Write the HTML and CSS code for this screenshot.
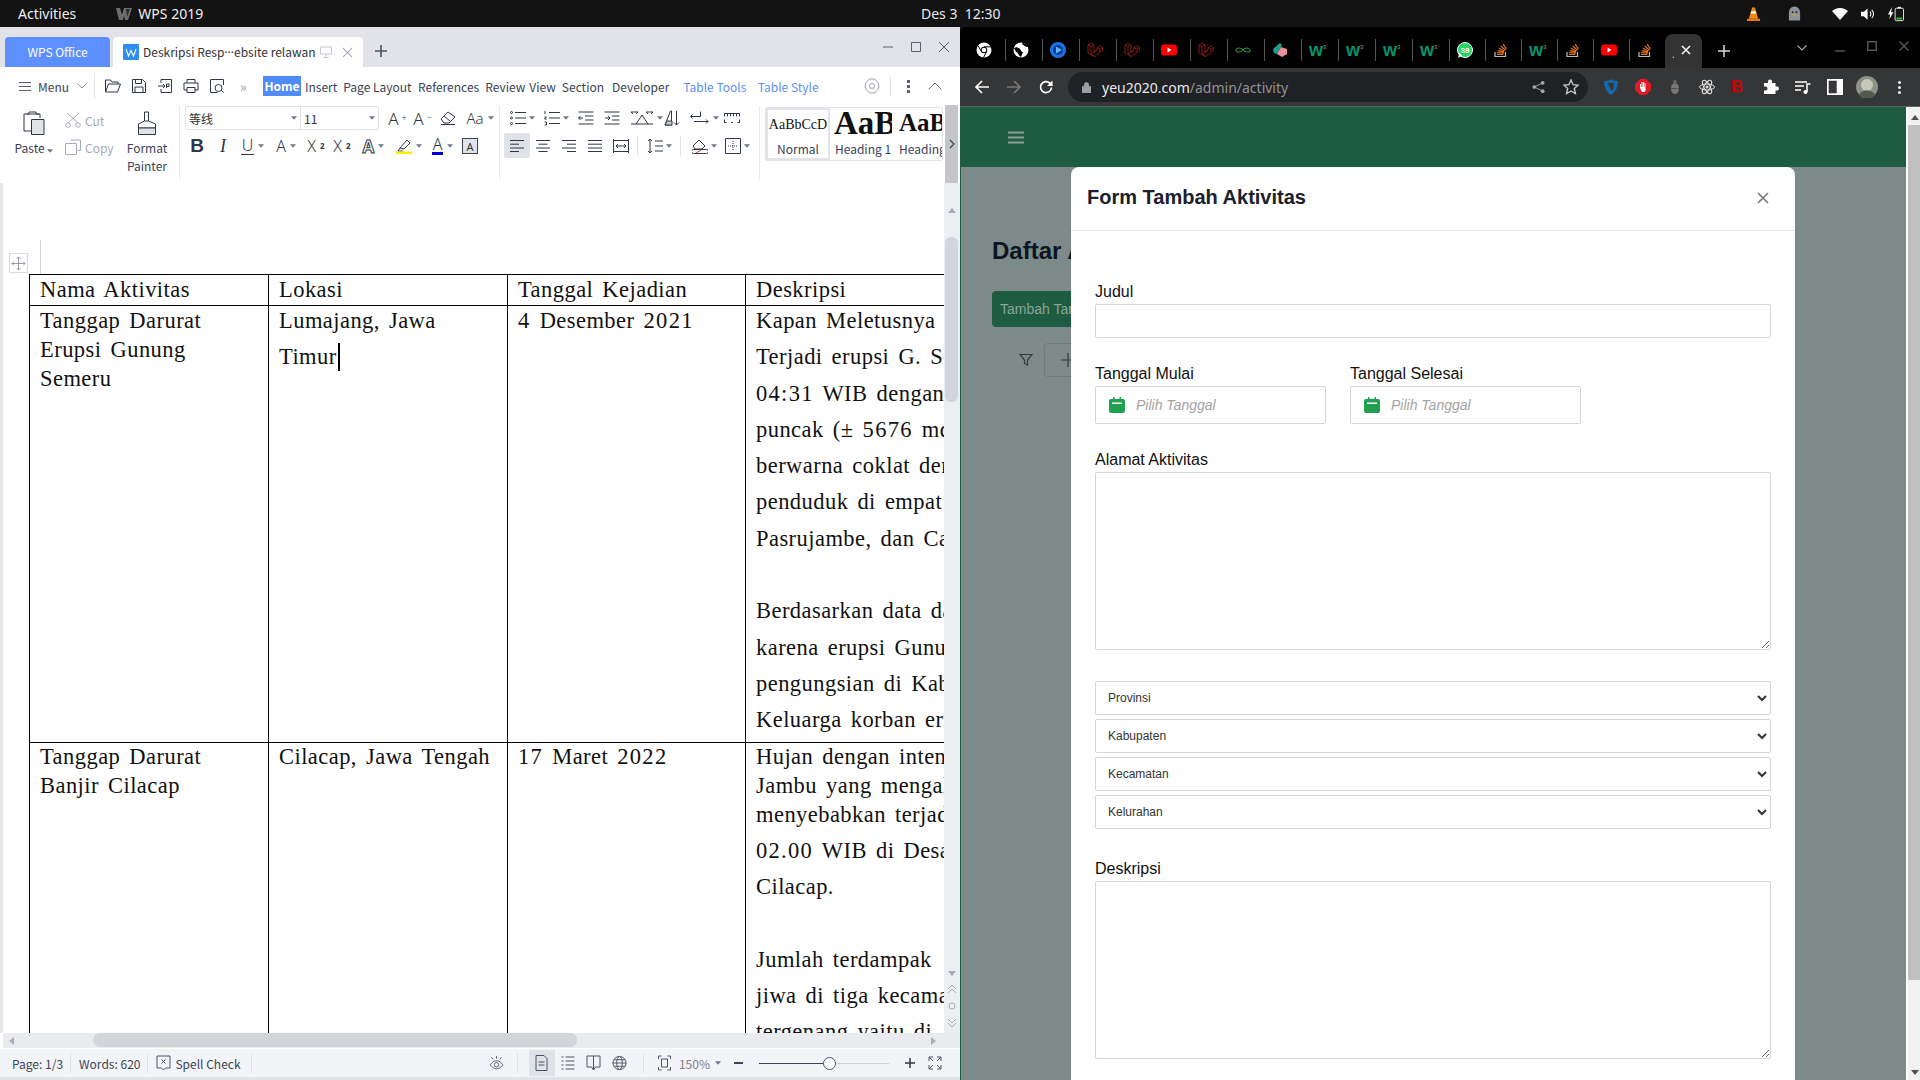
FILE: index.html
```html
<!DOCTYPE html>
<html lang="en">
<head>
    <meta charset="UTF-8" />
    <title>WPS and Chrome</title>
    <link rel="stylesheet" href="styles.css">
</head>
<body>
    <svg class="sprites" xmlns="http://www.w3.org/2000/svg">
        <symbol id="laravel" viewBox="0 0 16 16"><path d="M1 3l3-1.600L7 3v7l3-1.700V5.600l3-1.700 2.500 1.700v3L7.500 14.500 1 11zM1 3l3 1.700L7 3M4 4.700V11.500l3.500 3M4 11.500l6-3.200M10 5.600l3 1.600 2.500-1.600M13 7.200v3" fill="none" stroke="#8f1d14" stroke-width=".9"/></symbol>
        <symbol id="youtube" viewBox="0 0 16 16"><rect x="0" y="2.500" width="16" height="11" rx="3" fill="#f00"/><path d="M6.500 5.500v5l4-2.500z" fill="#fff"/></symbol>
        <symbol id="stack" viewBox="0 0 16 16"><path d="M2 10v4.500h10.500V10" fill="none" stroke="#bbb" stroke-width="1.200"/><path d="M4 12.500h6.500M4.200 10.600l6.400.6M4.800 8.400l6.200 1.700M6 6.200l5.500 3.100M7.800 4l4.700 4.300M10 2l3.400 5.200" fill="none" stroke="#e0711c" stroke-width="1.200"/></symbol>
        <symbol id="caret" viewBox="0 0 7 4"><path d="M0 0h7L3.500 4z" fill="#6f7787"/></symbol>
    </svg>

    <div class="topbar">
        <span class="activities">Activities</span>
        <svg class="wps-mark" viewBox="0 0 16 12"><path d="M0 0h4l2 7 2-7h8l-4 12H9L8 8l-1 4H3z" fill="#6d6d6d"/><path d="M10 1h4l-3 8z" fill="#2c2c2c"/></svg>
        <span class="app-name">WPS 2019</span>
        <span class="clock">Des 3&nbsp;&nbsp;12:30</span>
        <div class="tray">
            <svg class="tray-vlc" viewBox="0 0 16 16"><path d="M6.500 1h3l3.500 12H3z" fill="#ef8a1a"/><path d="M5.500 5h5l.6 2.500H4.900z" fill="#f3f3f3"/><path d="M1 13h14v2.500H1z" fill="#e8731a"/></svg>
            <svg class="tray-tux" viewBox="0 0 16 16"><path d="M8 0c4 0 6 3 6 8v7H2V8c0-5 2-8 6-8z" fill="#9aa2a8"/><circle cx="6" cy="6" r="1" fill="#222"/><circle cx="10" cy="6" r="1" fill="#222"/><path d="M6.500 8h3L8 11z" fill="#e8b33c"/></svg>
            <svg class="tray-wifi" viewBox="0 0 16 12"><path d="M0 3a12 12 0 0 1 16 0L8 12z" fill="#fff"/></svg>
            <svg class="tray-sound" viewBox="0 0 16 14"><path d="M0 4.500h3L7 1v12L3 9.500H0z" fill="#fff"/><path d="M9.500 4.500a3.500 3.500 0 0 1 0 5M11.500 2.500a6.500 6.500 0 0 1 0 9" fill="none" stroke="#fff" stroke-width="1.100"/></svg>
            <svg class="tray-batt" viewBox="0 0 18 16"><path d="M4.500 0L0 8.500h2.500L1.500 14 6 6H3.500z" fill="#fff"/><rect x="8" y="1.500" width="9.500" height="14" rx="1.500" fill="none" stroke="#fff"/><path d="M11 0h3.500v1.500H11z" fill="#fff"/><path d="M9.500 12h6.500v2.200H9.500z" fill="#2fbf2f"/></svg>
        </div>
    </div>

    <div class="desktop">
        <!-- WPS window -->
        <div class="wps">
            <div class="wps-title">
                <div class="tab-home">WPS Office</div>
                <div class="tab-doc">
                    <svg class="doc-logo" viewBox="0 0 16 16"><rect width="16" height="16" rx="1" fill="#2f8cf0"/><path d="M3 5l2.500 7L8 6.500 10.500 12 13 5" fill="none" stroke="#fff" stroke-width="1.100"/></svg>
                    <span class="doc-name">Deskripsi Resp<span class="ell">···</span>ebsite relawan</span>
                    <svg class="doc-mon" viewBox="0 0 12 12"><path d="M.5 1h11v7H.5zM6 8v3M3.500 11.500h5" fill="none" stroke="#c3c7cf"/></svg>
                    <svg class="doc-close" viewBox="0 0 12 12"><path d="M1 1l10 10M11 1L1 11" fill="none" stroke="#a4a9b3" stroke-width="1.100"/></svg>
                </div>
                <svg class="tab-plus" viewBox="0 0 12 12"><path d="M6 0v12M0 6h12" fill="none" stroke="#4a5366" stroke-width="1.600"/></svg>
                <div class="win-btns">
                    <svg viewBox="0 0 12 12"><path d="M1 6h10" stroke="#566072" fill="none"/></svg>
                    <svg viewBox="0 0 12 12"><path d="M1.500 1.500h9v9h-9z" stroke="#566072" fill="none"/></svg>
                    <svg viewBox="0 0 12 12"><path d="M1 1l10 10M11 1L1 11" stroke="#566072" fill="none"/></svg>
                </div>
            </div>

            <div class="menu-row">
                <div class="menu-left">
                    <svg class="ic ic-menu" viewBox="0 0 16 12"><path d="M1 1.500h14M1 6h14M1 10.500h14"/></svg>
                    <span class="menu-label">Menu</span>
                    <svg class="ic ic-down" viewBox="0 0 10 6"><path d="M.5.500L5 5 9.500.500"/></svg>
                </div>
                <div class="quick">
                    <svg class="ic" viewBox="0 0 16 14"><path d="M.5 13V1h5l1.500 2h6v2M.5 13h12l3-8H3.500z"/></svg>
                    <svg class="ic" viewBox="0 0 16 16"><path d="M1.500 1.500h10l3 3v10h-13zM4 14V9h8v5M4.500 1.500v4h6v-4"/></svg>
                    <svg class="ic" viewBox="0 0 16 16"><path d="M4 5V1.500h10.500v13H4V11M1 8h7M6 6l2 2-2 2M9.500 10V6h2.500v2.500H9.500"/></svg>
                    <svg class="ic" viewBox="0 0 16 16"><path d="M4 5V1.500h8V5M4 12H1V5h14v7h-3M4 9.500h8v5H4z"/></svg>
                    <svg class="ic" viewBox="0 0 16 16"><path d="M14.500 7V1.500h-13v13h7M9.500 6.500a3.500 3.500 0 1 1 0 7 3.500 3.500 0 0 1 0-7zM12 12l2.500 2.500"/></svg>
                    <span class="more">»</span>
                </div>
                <nav class="menu-tabs">
                    <span class="mt mt-home">Home</span>
                    <span class="mt mt-insert">Insert</span>
                    <span class="mt mt-layout">Page Layout</span>
                    <span class="mt mt-ref">References</span>
                    <span class="mt mt-review">Review</span>
                    <span class="mt mt-view">View</span>
                    <span class="mt mt-section">Section</span>
                    <span class="mt mt-dev">Developer</span>
                    <span class="mt mt-blue mt-ttools">Table Tools</span>
                    <span class="mt mt-blue">Table Style</span>
                </nav>
                <div class="menu-right">
                    <svg class="ic ic-gear" viewBox="0 0 16 16"><path d="M5.500 1h5l3.500 3.500 1 3.500-1 3.500L10.500 15h-5L2 11.500 1 8l1-3.500zM8 5.500a2.500 2.500 0 1 1 0 5 2.500 2.500 0 0 1 0-5z"/></svg>
                    <i class="vsep"></i>
                    <span class="dots"></span>
                    <svg class="ic ic-up" viewBox="0 0 14 8"><path d="M.5 7.500L7 1l6.500 6.500"/></svg>
                </div>
            </div>

            <div class="ribbon">
                <div class="rb-clip">
                    <div class="big-btn btn-paste">
                        <svg class="ic ic-big" viewBox="0 0 22 24"><path d="M1 20V3h5V1h7v2h4v4M1 20h7M4 3h12"/><path class="fillg" d="M8.500 8.500h12.500v15H8.500z"/></svg>
                        <span class="lb">Paste <svg class="caret"><use href="#caret"/></svg></span>
                    </div>
                    <div class="small-btns">
                        <span class="sb"><svg class="ic ic-dim" viewBox="0 0 16 16"><path d="M2 1l11 10M14 1L3 11"/><circle cx="3" cy="13" r="2.300"/><circle cx="13" cy="13" r="2.300"/></svg>Cut</span>
                        <span class="sb"><svg class="ic ic-dim" viewBox="0 0 16 16"><path d="M5.500 1h10v10.500h-3M.5 4.500h11v11H.5z"/></svg>Copy</span>
                    </div>
                    <div class="big-btn btn-painter">
                        <svg class="ic ic-big" viewBox="0 0 20 24"><path d="M7.500 1h4v9h-4zM7.500 10L1.500 13v4h17v-4l-7-3"/><path class="fillg" d="M1.500 17h17v6.500h-17z"/></svg>
                        <span class="lb">Format<br>Painter</span>
                    </div>
                </div>

                <div class="rb-font">
                    <div class="tool-row row-font">
                        <div class="font-box">
                            <div class="fb fb-name">等线<svg class="caret"><use href="#caret"/></svg></div>
                            <div class="fb fb-size">11<svg class="caret"><use href="#caret"/></svg></div>
                        </div>
                        <span class="t t-grow t-first">A<sup>+</sup></span>
                        <span class="t t-grow">A<sup>−</sup></span>
                        <svg class="ic ic-eraser" viewBox="0 0 16 14"><path d="M1 8L8 1l7 5-6 6H4zM4 5l6 5M1 13.500h14"/></svg>
                        <span class="t t-aa">Aa<svg class="caret"><use href="#caret"/></svg></span>
                    </div>
                    <div class="tool-row row-style">
                        <span class="t t-b">B</span>
                        <span class="t t-i">I</span>
                        <span class="t t-u"><span class="t-line">U</span><svg class="caret"><use href="#caret"/></svg></span>
                        <span class="t t-s">A<svg class="caret"><use href="#caret"/></svg></span>
                        <span class="t t-x">X<sup>2</sup></span>
                        <span class="t t-x2">X<sub>2</sub></span>
                        <span class="t t-fx">A<svg class="caret"><use href="#caret"/></svg></span>
                        <span class="t t-hl"><svg class="ic" viewBox="0 0 16 16"><path d="M4 10L11 2l3 3-6 6zM4 10l-2 3h5"/><path d="M0 13.500h16V16H0z" fill="#ffed00" stroke="none"/></svg><svg class="caret"><use href="#caret"/></svg></span>
                        <span class="t t-col"><span class="t-bar">A</span><svg class="caret"><use href="#caret"/></svg></span>
                        <span class="t t-box">A</span>
                    </div>
                </div>

                <div class="rb-para">
                    <div class="tool-row row-list">
                        <span class="p p-list"><svg class="ic" viewBox="0 0 16 14"><path d="M5 1.500h11M5 7h11M5 12.500h11"/><circle cx="1.500" cy="1.500" r="1"/><circle cx="1.500" cy="7" r="1"/><circle cx="1.500" cy="12.500" r="1"/></svg><svg class="caret"><use href="#caret"/></svg></span>
                        <span class="p p-list"><svg class="ic" viewBox="0 0 16 14"><path d="M5 1.500h11M5 7h11M5 12.500h11M1 0v3M.5 6h2l-2 2h2M.5 11h2v3h-2"/></svg><svg class="caret"><use href="#caret"/></svg></span>
                        <span class="p p-one"><svg class="ic" viewBox="0 0 16 14"><path d="M.5 1h15M7 5h8.500M7 9h8.500M.5 13h15M5 7H.5M2.500 5L.5 7l2 2"/></svg></span>
                        <span class="p p-one"><svg class="ic" viewBox="0 0 16 14"><path d="M.5 1h15M8 5h7.500M8 9h7.500M.5 13h15M1 7h5M4 5l2 2-2 2"/></svg></span>
                        <span class="p p-wide"><svg class="ic" viewBox="0 0 24 14"><path d="M6 13L12 4l6 9M1 13h22M1 1h7M1 1l2 2M8 1L6 3M16 1h7M16 1l2 2M23 1l-2 2"/></svg><svg class="caret"><use href="#caret"/></svg></span>
                        <span class="p p-one"><svg class="ic" viewBox="0 0 16 16"><path d="M1 15L6.500 1h1v14z"/><path d="M3 11h5v4H1z" fill="#c9ccd3"/><path d="M12.500 1v14M10 12.500l2.500 2.500 2.500-2.500"/></svg></span>
                        <span class="p p-wide p-tab"><svg class="ic" viewBox="0 0 20 14"><path d="M.5 5.500h10V.5M.5 5.500l2-2M.5 5.500l2 2M4 10.500h14M18 10.500l-2-2M18 10.500l-2 2"/></svg><svg class="caret"><use href="#caret"/></svg></span>
                        <span class="p p-one"><svg class="ic" viewBox="0 0 16 10"><path d="M.5 3.500V.5h15v3M3.500.5v3M6.500.5v3M9.500.5v3M12.500.5v3M.5 6.500v3h2M15.500 6.500v3h-2M7 9.500h2"/></svg></span>
                    </div>
                    <div class="tool-row row-align">
                        <span class="al al-on"><svg class="ic" viewBox="0 0 16 14"><path d="M1 1.500h14M1 5.200h9M1 9h14M1 12.500h9"/></svg></span>
                        <span class="al"><svg class="ic" viewBox="0 0 16 14"><path d="M1 1.500h14M3.500 5.200h9M1 9h14M3.500 12.500h9"/></svg></span>
                        <span class="al"><svg class="ic" viewBox="0 0 16 14"><path d="M1 1.500h14M6 5.200h9M1 9h14M6 12.500h9"/></svg></span>
                        <span class="al"><svg class="ic" viewBox="0 0 16 14"><path d="M1 1.500h14M1 5.200h14M1 9h14M1 12.500h14"/></svg></span>
                        <span class="al al-dist"><svg class="ic" viewBox="0 0 16 14"><path d="M.5 0v14M15.500 0v14M.5 1.500h15M.5 12.500h15M3 7h10M3 7l2-2M3 7l2 2M13 7l-2-2M13 7l-2 2"/></svg></span>
                        <i class="vsep vsep-al"></i>
                        <span class="p p-space"><svg class="ic" viewBox="0 0 16 16"><path d="M3 1v14M1 3l2-2 2 2M1 13l2 2 2-2M8 3h8M8 8h8M8 13h8"/></svg><svg class="caret"><use href="#caret"/></svg></span>
                        <i class="vsep vsep-al2"></i>
                        <span class="p p-shade"><svg class="ic" viewBox="0 0 16 16"><path d="M1 8l6-6 6 6-3 3H3zM1.500 11.500h13a2 2 0 0 1 0 4h-13a2 2 0 0 1 0-4z"/><path d="M4 15l5-3" stroke="#d23c3c"/></svg><svg class="caret"><use href="#caret"/></svg></span>
                        <span class="p p-border"><svg class="ic" viewBox="0 0 16 16"><path d="M.5.500h15v15H.5z"/><path d="M8 3v10M3 8h10" stroke-dasharray="1 1"/></svg><svg class="caret"><use href="#caret"/></svg></span>
                    </div>
                </div>

                <div class="rb-styles">
                    <div class="gallery">
                        <div class="st st-normal"><span class="st-sample">AaBbCcD</span><span class="st-name">Normal</span></div>
                        <div class="st st-h1"><span class="st-sample">AaBb</span><span class="st-name">Heading 1</span></div>
                        <div class="st st-h2"><span class="st-sample">AaBb</span><span class="st-name">Heading 2</span></div>
                    </div>
                </div>
                <div class="rb-scroll"><svg viewBox="0 0 6 10"><path d="M1 1l4 4-4 4" fill="none" stroke="#3c3f46" stroke-width="1.100"/></svg></div>
            </div>

            <div class="doc-wrap">
                <div class="doc">
                    <div class="move-handle"><svg viewBox="0 0 16 16"><path d="M8 1v14M1 8h14M8 1L6 3M8 1l2 2M8 15l-2-2M8 15l2-2M1 8l2-2M1 8l2 2M15 8l-2-2M15 8l-2 2" fill="none" stroke="#7a7f88" stroke-width=".8"/></svg></div>
                    <i class="margin-mark"></i>
                    <table class="doc-table">
                        <colgroup><col class="c1"><col class="c2"><col class="c3"><col class="c4"></colgroup>
                        <tr class="r-head">
                            <td>Nama Aktivitas</td><td>Lokasi</td><td>Tanggal Kejadian</td><td>Deskripsi</td>
                        </tr>
                        <tr class="r-one">
                            <td><div class="ln">Tanggap Darurat</div><div class="ln">Erupsi Gunung</div><div class="ln">Semeru</div></td>
                            <td><div class="ln lg">Lumajang, Jawa</div><div class="ln lg">Timur<i class="cursor"></i></div></td>
                            <td><div class="ln"><span class="num">4</span> Desember <span class="num">2021</span></div></td>
                            <td>
                                <div class="ln lg">Kapan Meletusnya Gunung</div>
                                <div class="ln lg">Terjadi erupsi G. Semeru</div>
                                <div class="ln lg"><span class="num">04:31</span> WIB dengan tinggi</div>
                                <div class="ln lg">puncak (± <span class="num">5676</span> mdpl)</div>
                                <div class="ln lg">berwarna coklat dengan</div>
                                <div class="ln lg">penduduk di empat desa</div>
                                <div class="ln lg">Pasrujambe, dan Candipuro</div>
                                <div class="ln lg">&nbsp;</div>
                                <div class="ln lg">Berdasarkan data dari</div>
                                <div class="ln lg">karena erupsi Gunung</div>
                                <div class="ln lg">pengungsian di Kabupaten</div>
                                <div class="ln lg">Keluarga korban erupsi</div>
                            </td>
                        </tr>
                        <tr class="r-two">
                            <td><div class="ln">Tanggap Darurat</div><div class="ln">Banjir Cilacap</div></td>
                            <td><div class="ln">Cilacap, Jawa Tengah</div></td>
                            <td><div class="ln"><span class="num">17</span> Maret <span class="num">2022</span></div></td>
                            <td>
                                <div class="ln">Hujan dengan intensitas</div>
                                <div class="ln">Jambu yang mengalir</div>
                                <div class="ln">menyebabkan terjadinya</div>
                                <div class="ln lg lg-gap"><span class="num">02.00</span> WIB di Desa</div>
                                <div class="ln lg">Cilacap.</div>
                                <div class="ln lg">&nbsp;</div>
                                <div class="ln lg">Jumlah terdampak</div>
                                <div class="ln lg">jiwa di tiga kecamatan</div>
                                <div class="ln lg">tergenang yaitu di</div>
                            </td>
                        </tr>
                    </table>
                </div>
                <div class="doc-vscroll">
                    <svg class="arr arr-top" viewBox="0 0 8 5"><path d="M4 0l4 5H0z" fill="#a9adb6"/></svg>
                    <i class="thumb"></i>
                    <div class="arr-stack">
                        <svg class="arr" viewBox="0 0 8 5"><path d="M0 0h8L4 5z" fill="#a9adb6"/></svg>
                        <svg class="arr" viewBox="0 0 8 8"><path d="M0 4l4-4 4 4M0 8l4-4 4 4" fill="none" stroke="#a9adb6"/></svg>
                        <svg class="arr" viewBox="0 0 8 8"><circle cx="4" cy="4" r="3" fill="none" stroke="#a9adb6"/></svg>
                        <svg class="arr" viewBox="0 0 8 8"><path d="M0 0l4 4 4-4M0 4l4 4 4-4" fill="none" stroke="#a9adb6"/></svg>
                    </div>
                </div>
            </div>

            <div class="doc-hscroll">
                <svg class="harr" viewBox="0 0 5 8"><path d="M5 0v8L0 4z" fill="#a9adb6"/></svg>
                <i class="hthumb"></i>
                <svg class="harr" viewBox="0 0 5 8"><path d="M0 0v8l5-4z" fill="#a9adb6"/></svg>
            </div>

            <div class="statusbar">
                <span class="sg sg-page">Page: 1/3</span>
                <span class="sg sg-words">Words: 620</span>
                <span class="sg sg-spell"><svg class="ic ic-st" viewBox="0 0 14 16"><path d="M.5 1h13v12H9l-2 2-2-2H.5zM5 4.500l4 4M9 4.500l-4 4"/></svg>Spell Check</span>
                <div class="st-right">
                    <svg class="ic ic-st st-eye" viewBox="0 0 16 18"><path d="M1 11c2-3 4-4.500 7-4.500s5 1.500 7 4.500c-2 3-4 4.500-7 4.500S3 14 1 11zM8 8.500a2.500 2.500 0 1 1 0 5 2.500 2.500 0 0 1 0-5zM8 1v3M2.500 2.500L4 5M13.500 2.500L12 5"/></svg>
                    <i class="vsep st-sep"></i>
                    <span class="view view-on"><svg class="ic ic-st" viewBox="0 0 12 16"><path d="M.5.500h8l3 3v12H.5zM3 7h6M3 10h6"/></svg></span>
                    <span class="view"><svg class="ic ic-st" viewBox="0 0 14 16"><path d="M1 2h2M5 2h9M1 6h2M5 6h9M1 10h2M5 10h9M1 14h2M5 14h9"/></svg></span>
                    <span class="view"><svg class="ic ic-st" viewBox="0 0 14 16"><path d="M.5 1h13v11H9L7 15l-2-3H.5zM7 1v14"/></svg></span>
                    <span class="view"><svg class="ic ic-st" viewBox="0 0 16 16"><circle cx="8" cy="8" r="7"/><ellipse cx="8" cy="8" rx="3" ry="7"/><path d="M1 8h14M2 4.500h12M2 11.500h12"/></svg></span>
                    <i class="vsep st-sep st-sep2"></i>
                    <svg class="ic ic-st st-fit" viewBox="0 0 14 16"><path d="M1 4V1h3M10 1h3v3M13 12v3h-3M4 15H1v-3M4 4h6v8H4z"/></svg>
                    <span class="zoom-val">150%<svg class="caret"><use href="#caret"/></svg></span>
                    <i class="z-minus"></i>
                    <span class="z-slider"><i class="z-handle"></i></span>
                    <svg class="ic z-plus" viewBox="0 0 10 10"><path d="M5 0v10M0 5h10" stroke-width="1.500"/></svg>
                    <svg class="ic ic-st st-full" viewBox="0 0 14 14"><path d="M1 5V1h4M1 1l4 4M13 5V1H9M13 1L9 5M1 9v4h4M1 13l4-4M13 9v4H9M13 13L9 9"/></svg>
                </div>
            </div>
        </div>

        <!-- Chrome window -->
        <div class="chrome">
            <div class="tabstrip">
                <div class="tab"><svg viewBox="0 0 16 16"><circle cx="8" cy="8" r="7.500" fill="#fff"/><circle cx="8" cy="8" r="3.200" fill="#000"/><circle cx="8" cy="8" r="2.300" fill="#fff"/><path d="M8 4.800h7M5.300 9.500L2 3.500M10.700 9.500L7.500 15.500" stroke="#000" stroke-width="1"/></svg></div>
                <div class="tab"><svg viewBox="0 0 16 16"><circle cx="8" cy="8" r="7.500" fill="#fff"/><path d="M1 6c3-2 5 0 6 1s1 3 3 3l-2 5C5 13 5 10 3 10zM9 1c0 2 2 2 3 3s2 1 3 1C14 3 12 1 9 1z" fill="#000"/></svg></div>
                <div class="tab"><svg viewBox="0 0 16 16"><circle cx="8" cy="8" r="8" fill="#1a73e8"/><circle cx="8" cy="8" r="5" fill="#0a3d91"/><path d="M6 4.500v7l6-3.500z" fill="#5fb0ff"/></svg></div>
                <div class="tab"><svg><use href="#laravel"/></svg></div>
                <div class="tab"><svg><use href="#laravel"/></svg></div>
                <div class="tab"><svg><use href="#youtube"/></svg></div>
                <div class="tab"><svg><use href="#laravel"/></svg></div>
                <div class="tab"><svg viewBox="0 0 16 16"><path d="M8 8C6.500 5.500 1.500 5 1 8s5 3 7 0 5.500-2.500 7 0-5 3-7 0z" fill="none" stroke="#2f8d46" stroke-width="1.100"/></svg></div>
                <div class="tab"><svg viewBox="0 0 16 16"><path d="M1 7l7-6 2 2-5 9-3-1z" fill="#1f9e8f"/><path d="M5 12l4-7 6 2v5l-5 3z" fill="#ec8f9a"/></svg></div>
                <div class="tab"><span class="w3">w<sup>3</sup></span></div>
                <div class="tab"><span class="w3">w<sup>3</sup></span></div>
                <div class="tab"><span class="w3">w<sup>3</sup></span></div>
                <div class="tab"><span class="w3">w<sup>3</sup></span></div>
                <div class="tab tab-n"><svg viewBox="0 0 16 16"><circle cx="8" cy="8" r="7.500" fill="#25d366" stroke="#fff"/><path d="M1 15.500l1.500-4.500 3 3z" fill="#fff"/><text x="8" y="11" text-anchor="middle" class="wa-count">39</text></svg></div>
                <div class="tab tab-n"><svg><use href="#stack"/></svg></div>
                <div class="tab tab-n"><span class="w3">w<sup>3</sup></span></div>
                <div class="tab tab-n"><svg><use href="#stack"/></svg></div>
                <div class="tab tab-n"><svg><use href="#youtube"/></svg></div>
                <div class="tab tab-n tab-last"><svg><use href="#stack"/></svg></div>
                <div class="tab-active"><span class="tab-dot">.</span><svg viewBox="0 0 10 10"><path d="M1 1l8 8M9 1L1 9" fill="none" stroke="#fff" stroke-width="1.500"/></svg></div>
                <svg class="new-tab" viewBox="0 0 12 12"><path d="M6 0v12M0 6h12" fill="none" stroke="#d8d8d8" stroke-width="1.500"/></svg>
                <div class="tab-ctrls">
                    <svg class="c-down" viewBox="0 0 10 6"><path d="M.5.500L5 5 9.500.500" fill="none" stroke="#aaa" stroke-width="1.100"/></svg>
                    <svg class="c-min" viewBox="0 0 10 10"><path d="M0 8h10" stroke="#555" stroke-width="1.500" fill="none"/></svg>
                    <svg class="c-max" viewBox="0 0 10 10"><path d="M.7.700h8.600v8.600H.7z" stroke="#555" stroke-width="1.500" fill="none"/></svg>
                    <svg class="c-close" viewBox="0 0 10 10"><path d="M.5.500l9 9M9.500.500l-9 9" stroke="#555" stroke-width="1.500" fill="none"/></svg>
                </div>
            </div>

            <div class="toolbar">
                <svg class="nav nav-back" viewBox="0 0 16 16"><path d="M15 8H2M8 2L2 8l6 6" fill="none" stroke="#fff" stroke-width="1.700"/></svg>
                <svg class="nav nav-fwd" viewBox="0 0 16 16"><path d="M1 8h13M8 2l6 6-6 6" fill="none" stroke="#777" stroke-width="1.700"/></svg>
                <svg class="nav nav-reload" viewBox="0 0 16 16"><path d="M13.500 8.500a5.500 5.500 0 1 1-1.600-4.300L14 6.500" fill="none" stroke="#fff" stroke-width="1.700"/><path d="M14.500 1.500v5.500H9z" fill="#fff"/></svg>
                <div class="omnibox">
                    <svg class="lock" viewBox="0 0 10 12"><path d="M0 5h10v7H0zM2.500 5V3a2.500 2.500 0 0 1 5 0v2" fill="#9aa0a6" stroke="#9aa0a6" stroke-width=".8" fill-rule="evenodd"/></svg>
                    <span class="url">yeu2020.com<span class="url-path">/admin/activity</span></span>
                    <svg class="omni-ic" viewBox="0 0 14 14"><circle cx="11.500" cy="2.500" r="2" fill="#aaa"/><circle cx="2.500" cy="7" r="2" fill="#aaa"/><circle cx="11.500" cy="11.500" r="2" fill="#aaa"/><path d="M11.500 2.500L2.500 7l9 4.500" fill="none" stroke="#aaa"/></svg>
                    <svg class="omni-ic omni-star" viewBox="0 0 16 16"><path d="M8 1l2.100 4.700 5 .5-3.800 3.300 1.100 5L8 12l-4.400 2.500 1.100-5L.9 6.200l5-.5z" fill="none" stroke="#c4c7c5" stroke-width="1.400"/></svg>
                </div>
                <div class="exts">
                    <svg viewBox="0 0 16 16"><path d="M1 2c4 0 6-1 7-2 1 1 3 2 7 2 0 6-2 11-7 14C3 13 1 8 1 2z" fill="#1567a8"/><path d="M5 4h6l-1 7H8z" fill="#35363a"/></svg>
                    <svg viewBox="0 0 16 16"><path d="M5 0h6l5 5v6l-5 5H5l-5-5V5z" fill="#e01b24"/><path d="M5 9V5h1v3h.5V3h1v5H8V3h1v5h.5V4h1v7l-1 2H7z" fill="#fff"/></svg>
                    <svg viewBox="0 0 16 16"><ellipse cx="8" cy="9.500" rx="4" ry="5.500" fill="#777"/><circle cx="8" cy="3" r="2" fill="#666"/><path d="M4 9.500h8" stroke="#555"/></svg>
                    <svg viewBox="0 0 16 16"><g fill="none" stroke="#ddd"><ellipse cx="8" cy="8" rx="7.500" ry="3"/><ellipse cx="8" cy="8" rx="7.500" ry="3" transform="rotate(60 8 8)"/><ellipse cx="8" cy="8" rx="7.500" ry="3" transform="rotate(120 8 8)"/></g><circle cx="8" cy="8" r="1.500" fill="#ddd"/></svg>
                    <span class="ext-b">B</span>
                    <svg viewBox="0 0 16 16"><path d="M5 2.500a2 2 0 0 1 4 0V4h3.500v3.500H14a2 2 0 0 1 0 4h-1.500V15H1v-3.500h1.500a2 2 0 0 0 0-4H1V4h4z" fill="#fff"/></svg>
                    <svg viewBox="0 0 16 16"><path d="M0 3h12M0 7h9M0 11h6" stroke="#fff" stroke-width="1.500"/><path d="M12 13V5h3.500" fill="none" stroke="#fff" stroke-width="1.500"/><circle cx="10.500" cy="13" r="2" fill="#fff"/></svg>
                    <svg viewBox="0 0 14 14"><path d="M0 0h14v14H0z" fill="#fff"/><path d="M1.500 1.500h7v11h-7z" fill="#35363a"/></svg>
                    <svg class="avatar" viewBox="0 0 22 22"><circle cx="11" cy="11" r="11" fill="#8d9387"/><circle cx="11" cy="9" r="6" fill="#c6c8bc"/><path d="M3 19c2-6 14-6 16 0l-3 3H6z" fill="#54594e"/></svg>
                    <span class="kebab"></span>
                </div>
            </div>

            <div class="viewport">
                <div class="page">
                    <div class="page-head">
                        <svg class="burger" viewBox="0 0 16 13"><path d="M0 1.500h16M0 6.500h16M0 11.500h16" stroke="#8f9b99" stroke-width="2"/></svg>
                    </div>
                    <div class="page-body">
                        <h1 class="page-title">Daftar Aktivitas</h1>
                        <div class="page-btn">Tambah Tanggap</div>
                        <div class="page-tools">
                            <svg viewBox="0 0 14 14"><path d="M1 1.500h12L8.500 7v5l-3-1.500V7z" fill="none" stroke="#333d3d" stroke-width="1.200"/></svg>
                            <span class="add-box"><svg viewBox="0 0 14 14"><path d="M7 0v14M0 7h14" fill="none" stroke="#333d3d" stroke-width="1.200"/></svg></span>
                        </div>
                    </div>

                    <div class="modal">
                        <div class="modal-head">
                            <h2 class="modal-title">Form Tambah Aktivitas</h2>
                            <svg class="modal-x" viewBox="0 0 12 12"><path d="M1 1l10 10M11 1L1 11" fill="none" stroke="#777" stroke-width="1.600"/></svg>
                        </div>
                        <form class="modal-body">
                            <div class="field">
                                <label>Judul</label>
                                <input class="ctl ctl-text" type="text">
                            </div>
                            <div class="field-row">
                                <div class="field">
                                    <label>Tanggal Mulai</label>
                                    <div class="date-box">
                                        <svg viewBox="0 0 16 16"><path d="M4 0h1.500v2h5V0H12v2h2a2 2 0 0 1 2 2v10a2 2 0 0 1-2 2H2a2 2 0 0 1-2-2V4a2 2 0 0 1 2-2h2z" fill="#22a052"/><path d="M3 5.500h10V7H3z" fill="#fff"/></svg>
                                        <span class="ph">Pilih Tanggal</span>
                                    </div>
                                </div>
                                <div class="field">
                                    <label>Tanggal Selesai</label>
                                    <div class="date-box">
                                        <svg viewBox="0 0 16 16"><path d="M4 0h1.500v2h5V0H12v2h2a2 2 0 0 1 2 2v10a2 2 0 0 1-2 2H2a2 2 0 0 1-2-2V4a2 2 0 0 1 2-2h2z" fill="#22a052"/><path d="M3 5.500h10V7H3z" fill="#fff"/></svg>
                                        <span class="ph">Pilih Tanggal</span>
                                    </div>
                                </div>
                            </div>
                            <div class="field">
                                <label>Alamat Aktivitas</label>
                                <textarea class="ctl ctl-area"></textarea>
                            </div>
                            <div class="selects">
                                <select class="ctl ctl-select"><option>Provinsi</option></select>
                                <select class="ctl ctl-select"><option>Kabupaten</option></select>
                                <select class="ctl ctl-select"><option>Kecamatan</option></select>
                                <select class="ctl ctl-select"><option>Kelurahan</option></select>
                            </div>
                            <div class="field field-desc">
                                <label>Deskripsi</label>
                                <textarea class="ctl ctl-area"></textarea>
                            </div>
                        </form>
                    </div>
                </div>
                <div class="page-scroll">
                    <svg viewBox="0 0 8 5"><path d="M4 0l4 5H0z" fill="#505050"/></svg>
                    <i class="page-thumb"></i>
                    <svg viewBox="0 0 8 5"><path d="M0 0h8L4 5z" fill="#505050"/></svg>
                </div>
            </div>
        </div>
    </div>
</body>
</html>
```

FILE: styles.css
```css
html, body {
    margin: 0;
    padding: 0;
    width: 1920px;
    height: 1080px;
    overflow: hidden;
}

body {
    display: flex;
    flex-direction: column;
    font-family: "Noto Sans", sans-serif;
    background: #131313;
}

i { display: block; font-style: normal; }
.sprites { display: none; }

/* GNOME top bar */
.topbar {
    height: 27px;
    flex: none;
    display: flex;
    align-items: center;
    position: relative;
    background: #131313;
    color: #eee;
    font-size: 14px;
}

.activities { margin-left: 18px; }
.wps-mark { width: 16px; height: 12px; margin-left: 40px; }
.app-name { margin-left: 6px; }

.clock {
    position: absolute;
    left: 921px;
    top: 4px;
    font-size: 14px;
    color: #e8e8e8;
}

.tray {
    margin-left: auto;
    display: flex;
    align-items: center;
    padding-right: 16px;
}

.tray-vlc { width: 15px; height: 16px; }
.tray-tux { width: 15px; height: 16px; margin-left: 26px; opacity: 0.9; }
.tray-wifi { width: 16px; height: 12px; margin-left: 30px; }
.tray-sound { width: 15px; height: 14px; margin-left: 13px; }
.tray-batt { width: 16px; height: 16px; margin-left: 12px; }

.desktop {
    flex: 1;
    display: flex;
    min-height: 0;
}

/* WPS window */
.wps {
    width: 960px;
    flex: none;
    display: flex;
    flex-direction: column;
    background: #fff;
    font-family: "Noto Sans CJK SC", "Noto Sans", sans-serif;
    color: #3a4254;
}

.wps-title {
    height: 40px;
    flex: none;
    display: flex;
    align-items: flex-end;
    background: #e1e3e8;
    padding-left: 5px;
}

.tab-home {
    width: 105px;
    height: 30px;
    background: #5e8fff;
    color: #fff;
    border-radius: 4px 4px 0 0;
    font-size: 12px;
    line-height: 30px;
    text-align: center;
}

.tab-doc {
    width: 250px;
    height: 30px;
    margin-left: 3px;
    background: #fff;
    border-radius: 4px 4px 0 0;
    display: flex;
    align-items: center;
}

.doc-logo { width: 16px; height: 16px; margin-left: 10px; flex: none; }
.doc-name { margin-left: 4px; font-size: 12px; color: #333; white-space: nowrap; }
.ell { font-family: "Noto Sans", sans-serif; }
.doc-mon { width: 12px; height: 12px; margin-left: 4px; flex: none; }
.doc-close { width: 11px; height: 11px; margin-left: 10px; flex: none; }
.tab-plus { width: 12px; height: 12px; margin: 0 0 10px 12px; }

.win-btns {
    margin: 0 10px 14px auto;
    display: flex;
    gap: 16px;
}

.win-btns svg { width: 12px; height: 12px; }

.ic {
    width: 16px;
    height: 16px;
    fill: none;
    stroke: #2f3747;
    stroke-width: 1;
    flex: none;
}

.caret { width: 6px; height: 4px; flex: none; }
.vsep { width: 1px; height: 20px; background: #e1e3e8; flex: none; }

.menu-row {
    height: 38px;
    flex: none;
    display: flex;
    align-items: center;
    font-size: 12px;
}

.menu-left {
    width: 95px;
    height: 25px;
    flex: none;
    display: flex;
    align-items: center;
    padding-left: 18px;
    box-sizing: border-box;
    border-right: 1px solid #e1e3e8;
}

.ic-menu { width: 14px; height: 11px; stroke: #3d4454; }
.menu-label { margin-left: 6px; color: #3d4454; }
.ic-down { width: 10px; height: 6px; margin-left: 8px; stroke: #8a8f99; }

.quick {
    display: flex;
    align-items: center;
    gap: 10px;
    width: 168px;
    flex: none;
    padding-left: 10px;
    box-sizing: border-box;
}

.more { color: #9aa0aa; font-size: 14px; margin-left: 5px; }

.menu-tabs {
    display: flex;
    align-items: center;
    height: 20px;
    width: 560px;
    flex: none;
}

.mt { white-space: nowrap; flex: none; }

.mt-home {
    background: #4f8cf7;
    color: #fff;
    font-weight: 700;
    width: 38px;
    height: 20px;
    line-height: 20px;
    text-align: center;
    margin-right: 4px;
}

.mt-insert { margin-right: 6px; }
.mt-layout { margin-right: 6.500px; }
.mt-ref { margin-right: 6px; }
.mt-review { margin-right: 4px; }
.mt-view { margin-right: 6px; }
.mt-section { margin-right: 8px; }
.mt-dev { margin-right: 14px; }
.mt-blue { color: #5b8ff9; }
.mt-ttools { margin-right: 11.500px; }

.menu-right {
    display: flex;
    align-items: center;
    flex: 1;
}

.ic-gear { margin-left: 41px; stroke: #9ea3ad; }
.menu-right .vsep { margin-left: 10px; }

.dots {
    width: 3px;
    height: 3px;
    margin-left: 16px;
    background: #5a6272;
    box-shadow: 0 -5px 0 #5a6272, 0 5px 0 #5a6272;
}

.ic-up { width: 14px; height: 8px; margin-left: 18px; stroke: #6b7280; }

/* ribbon */
.ribbon {
    height: 78px;
    flex: none;
    display: flex;
    font-size: 12px;
}

.rb-clip {
    width: 180px;
    flex: none;
    box-sizing: border-box;
    height: 75px;
    margin-top: 1px;
    border-right: 1px solid #e9ebef;
    display: flex;
}

.big-btn {
    display: flex;
    flex-direction: column;
    align-items: center;
    line-height: 18px;
    text-align: center;
    padding-top: 5px;
}

.ic-big { width: 22px; height: 24px; }
.fillg { fill: #e1e3e8; }
.lb { margin-top: 4px; white-space: nowrap; }
.btn-paste { width: 38px; margin-left: 15px; }
.btn-painter { width: 42px; margin-left: 13px; }
.btn-painter .ic-big { width: 20px; }

.small-btns {
    width: 48px;
    margin-left: 12px;
    padding-top: 5px;
    box-sizing: border-box;
    display: flex;
    flex-direction: column;
    gap: 9px;
    color: #a6abb5;
    font-size: 12px;
}

.sb { display: flex; align-items: center; gap: 4px; height: 18px; white-space: nowrap; }
.ic-dim { stroke: #a6abb5; }

.tool-row {
    display: flex;
    align-items: center;
}

.rb-font {
    width: 320px;
    flex: none;
    box-sizing: border-box;
    height: 75px;
    margin-top: 1px;
    border-right: 1px solid #e9ebef;
    padding-left: 5px;
}

.row-font { height: 24px; }

.font-box {
    width: 194px;
    height: 24px;
    flex: none;
    box-sizing: border-box;
    border: 1px solid #e1e3e8;
    border-radius: 2px;
    display: flex;
    font-size: 12px;
    color: #333;
}

.fb {
    display: flex;
    align-items: center;
    justify-content: space-between;
    box-sizing: border-box;
    padding: 0 3px 0 3px;
}

.fb-name { width: 115px; border-right: 1px solid #e1e3e8; }
.fb-size { flex: 1; }

.t {
    display: inline-flex;
    align-items: center;
    justify-content: center;
    gap: 4px;
    flex: none;
    font-family: "Noto Sans", sans-serif;
    font-weight: 300;
    color: #2f3747;
}

.t-grow { width: 25px; font-size: 17px; }
.t-first { margin-left: 6px; }
.t-grow sup { font-size: 9px; line-height: 0; margin-left: -1px; }
.ic-eraser { margin-left: 5px; }
.t-aa { width: 28px; font-size: 15px; margin-left: 10px; }

.row-style { height: 28px; margin-top: 2px; margin-left: -1px; }
.t-b { width: 26px; font-size: 19px; font-weight: 700; font-family: "Liberation Sans", sans-serif; }
.t-i { width: 26px; font-family: "Liberation Serif", serif; font-style: italic; font-size: 18px; }
.t-u { width: 33px; font-size: 16px; }
.t-line { border-bottom: 1px solid #2f3747; line-height: 17px; padding: 0 1px; }
.t-s { width: 34px; font-size: 16px; }
.t-x { width: 26px; font-size: 16px; }
.t-x2 { width: 26px; font-size: 16px; }
.t-x sup, .t-x2 sub { font-size: 8px; line-height: 0; font-weight: 700; }
.t-fx { width: 37px; font-size: 17px; font-weight: 700; color: #fff; -webkit-text-stroke: 1px #2f3747; }
.t-hl { width: 34px; }
.t-col { width: 33px; font-size: 16px; }
.t-bar { border-bottom: 3px solid #0000d0; line-height: 15px; padding: 0 1px; }
.t-box {
    width: 14px;
    height: 14px;
    margin-left: 3px;
    background: #e1e3e8;
    border: 1px solid #3a4254;
    font-size: 11px;
    font-weight: 400;
}

.rb-para {
    width: 260px;
    flex: none;
    box-sizing: border-box;
    height: 75px;
    margin-top: 1px;
    border-right: 1px solid #e9ebef;
}

.row-list { height: 24px; padding-left: 10px; }
.p { display: inline-flex; align-items: center; gap: 3px; flex: none; }
.p-list { width: 34px; }
.p-one { width: 26px; }
.p-wide { width: 34px; }
.p-wide .ic { width: 24px; height: 14px; }
.p-tab .ic { width: 20px; height: 14px; }

.row-align { height: 25px; margin-top: 3px; padding-left: 4px; }

.al {
    width: 26px;
    height: 25px;
    flex: none;
    display: inline-flex;
    align-items: center;
    justify-content: center;
    border-radius: 2px;
}

.al-on { background: #dfe3e8; }
.vsep-al { margin-left: 3px; }
.vsep-al2 { margin-left: 8px; }
.p-space { margin-left: 9px; }
.p-shade { margin-left: 11px; gap: 3px; }
.p-border { margin-left: 8px; }

.rb-styles { width: 185px; flex: none; padding: 2px 0 0 5px; box-sizing: border-box; }

.gallery {
    width: 178px;
    height: 54px;
    box-sizing: border-box;
    border: 1px solid #e1e3e8;
    border-radius: 2px;
    display: flex;
    overflow: hidden;
}

.st {
    flex: none;
    display: flex;
    flex-direction: column;
    align-items: center;
    overflow: hidden;
    box-sizing: border-box;
}

.st-normal { width: 64px; border: 2px solid #e1e3e8; }
.st-h1 { width: 69px; padding-right: 3px; }
.st-h2 { width: 44px; align-items: flex-start; }

.st-sample {
    height: 32px;
    line-height: 32px;
    font-family: "Liberation Serif", serif;
    font-weight: 700;
    color: #111;
    white-space: nowrap;
}

.st-normal .st-sample { font-weight: 400; font-size: 14px; height: 30px; line-height: 30px; }
.st-h1 .st-sample { font-size: 33px; line-height: 30px; width: 58px; overflow: hidden; }
.st-h2 .st-sample { font-size: 25px; line-height: 30px; }
.st-name { font-size: 12px; line-height: 18px; white-space: nowrap; }

.rb-scroll {
    width: 13px;
    height: 78px;
    flex: none;
    background: #c4c6cc;
    display: flex;
    align-items: center;
    justify-content: center;
}

.rb-scroll svg { width: 6px; height: 10px; }

/* document */
.doc-wrap {
    flex: 1;
    min-height: 0;
    display: flex;
    background: #fff;
    border-left: 3px solid #e6e8ec;
}

.doc {
    width: 941px;
    flex: none;
    position: relative;
    overflow: hidden;
    padding: 91px 0 0 26px;
    box-sizing: border-box;
}

.move-handle {
    position: absolute;
    left: 6px;
    top: 70px;
    width: 19px;
    height: 20px;
    box-sizing: border-box;
    border: 1px solid #d9dbe0;
    display: flex;
    align-items: center;
    justify-content: center;
}

.move-handle svg { width: 15px; height: 15px; }

.margin-mark {
    position: absolute;
    left: 37px;
    top: 57px;
    width: 1px;
    height: 34px;
    background: #d0d2d6;
}

.doc-table {
    border-collapse: collapse;
    table-layout: fixed;
    width: 956px;
    font-family: "Liberation Serif", serif;
    font-size: 22.500px;
    letter-spacing: 0.45px;
    word-spacing: 3px;
    color: #111;
}

.c1, .c2 { width: 239px; }
.c3 { width: 238px; }
.doc-table td {
    border: 1px solid #000;
    padding: 0 0 0 10px;
    vertical-align: top;
    white-space: nowrap;
    overflow: hidden;
}

.r-head { height: 31px; }
.r-head td { line-height: 30px; vertical-align: top; }
.r-one { height: 437px; }
.r-two { height: 400px; }

.ln { line-height: 29px; }
.lg { line-height: 36.300px; }
.lg:first-child { margin-top: -3px; }
.lg-gap { margin-top: 4px; }
.r-two .ln:first-child { margin-top: -1px; }
.num { letter-spacing: 1.3px; }

.cursor {
    display: inline-block;
    width: 2px;
    height: 28px;
    margin-left: 1px;
    vertical-align: -7px;
    background: #000;
}

.doc-vscroll {
    width: 16px;
    flex: none;
    position: relative;
    background: #eceef1;
}

.thumb {
    position: absolute;
    left: 1px;
    top: 54px;
    width: 13px;
    height: 165px;
    border-radius: 6px;
    background: #d2d5de;
}

.arr { width: 8px; height: 5px; display: block; }
.arr-top { position: absolute; left: 4px; top: 25px; }

.arr-stack {
    position: absolute;
    left: 4px;
    bottom: 6px;
    display: flex;
    flex-direction: column;
    gap: 9px;
}

.arr-stack .arr { height: 8px; }
.arr-stack .arr:first-child { height: 5px; }

.doc-hscroll {
    height: 15px;
    flex: none;
    display: flex;
    align-items: center;
    background: #e9ebef;
    margin-left: 3px;
    position: relative;
}

.hthumb {
    position: absolute;
    left: 90px;
    top: 0;
    width: 484px;
    height: 14px;
    border-radius: 7px;
    background: #d2d5dc;
}

.harr { width: 5px; height: 8px; }
.harr:first-child { margin-left: 6px; }
.harr:last-child { margin-left: 917px; }

.statusbar {
    height: 28px;
    flex: none;
    margin-bottom: 3px;
    display: flex;
    align-items: center;
    background: #f3f4f7;
    border-top: 1px solid #fff;
    font-size: 12px;
    color: #3d4454;
    box-shadow: 0 3px 0 #e1e3e8;
}

.sg {
    display: flex;
    align-items: center;
    gap: 4px;
    height: 20px;
    padding-right: 7px;
    border-right: 1px solid #e1e3e8;
    white-space: nowrap;
}

.sg-page { margin-left: 12px; }
.sg-words { margin-left: 8px; }
.sg-spell { margin-left: 8px; padding-right: 10px; }
.ic-st { width: 15px; height: 16px; stroke: #4a5366; }

.st-right {
    margin-left: auto;
    display: flex;
    align-items: center;
    padding-right: 18px;
}

.st-sep { margin-left: 13px; }
.st-sep2 { margin-left: 10px; }

.view {
    width: 26px;
    height: 26px;
    display: flex;
    align-items: center;
    justify-content: center;
}

.st-sep + .view { margin-left: 11px; }
.view-on { background: #dfe3e8; }
.st-fit { margin-left: 13px; }

.zoom-val {
    display: flex;
    align-items: center;
    gap: 5px;
    margin-left: 7px;
    color: #7b818d;
    font-size: 12px;
}

.z-minus { width: 9px; height: 2px; background: #3d4454; margin-left: 13px; }

.z-slider {
    width: 130px;
    height: 1px;
    margin-left: 16px;
    position: relative;
    background: linear-gradient(to right, #3d4454 54%, #cfd2d8 54%);
}

.z-handle {
    position: absolute;
    left: 64px;
    top: -6px;
    width: 11px;
    height: 11px;
    border: 1px solid #4a5366;
    border-radius: 50%;
    background: #fff;
}

.z-plus { width: 10px; height: 10px; margin-left: 16px; }
.st-full { width: 14px; height: 14px; margin-left: 13px; }

/* Chrome window */
.chrome {
    flex: 1;
    min-width: 0;
    display: flex;
    flex-direction: column;
    background: #000;
    font-family: "Noto Sans", sans-serif;
    border-top-left-radius: 6px;
}

.tabstrip {
    height: 41px;
    flex: none;
    display: flex;
    align-items: flex-end;
    background: #000;
    padding-left: 9px;
    border-radius: 8px 8px 0 0;
}

.tab {
    width: 37px;
    height: 22px;
    margin-bottom: 7px;
    padding-left: 7px;
    flex: none;
    box-sizing: border-box;
    border-right: 1px solid #555;
    display: flex;
    align-items: center;
}

.tab-n { width: 36px; }
.tab svg { width: 16px; height: 16px; flex: none; }
.tab-last { border-right: 0; }

.wa-count {
    font-family: "Liberation Sans", sans-serif;
    font-size: 8px;
    font-weight: 700;
    fill: #fff;
}

.w3 {
    font-family: "Liberation Sans", sans-serif;
    font-weight: 700;
    font-size: 18px;
    line-height: 16px;
    color: #07936c;
    white-space: nowrap;
}

.w3 sup { font-size: 6px; font-weight: 400; color: #999; line-height: 0; vertical-align: 7px; }

.tab-active {
    width: 37px;
    height: 34px;
    margin-left: -1px;
    flex: none;
    background: #333;
    border-radius: 8px 8px 0 0;
    display: flex;
    align-items: center;
    justify-content: flex-end;
    padding-right: 11px;
    box-sizing: border-box;
    position: relative;
    color: #ccc;
    font-size: 10px;
}

.tab-active svg { width: 10px; height: 10px; margin-bottom: 3px; }
.tab-dot { position: absolute; left: 7px; top: 13px; }
.new-tab { width: 12px; height: 12px; margin: 0 0 11px 16px; }

.tab-ctrls {
    display: flex;
    align-items: center;
    margin: 0 0 13px auto;
    padding-right: 11px;
}

.c-down { width: 10px; height: 6px; margin-right: 28px; }
.c-min, .c-max, .c-close { width: 10px; height: 10px; }
.c-max { margin: 0 22px 4px; }
.c-close { margin-bottom: 4px; }

.toolbar {
    height: 38px;
    flex: none;
    display: flex;
    align-items: center;
    background: #353638;
    border-bottom: 1px solid #5f6368;
    box-sizing: content-box;
}

.nav { width: 16px; height: 16px; flex: none; }
.nav-back { margin-left: 14px; }
.nav-fwd { margin-left: 16px; }
.nav-reload { margin-left: 16px; }

.omnibox {
    width: 520px;
    height: 30px;
    margin-left: 14px;
    flex: none;
    display: flex;
    align-items: center;
    background: #202124;
    border-radius: 15px;
}

.lock { width: 9px; height: 11px; margin-left: 14px; }
.url { margin-left: 11px; font-size: 14px; color: #e8eaed; white-space: nowrap; }
.url-path { color: #8f9296; }
.omni-ic { width: 13px; height: 14px; margin-left: auto; }
.omni-star { width: 16px; height: 16px; margin: 0 9px 0 18px; }

.exts {
    display: flex;
    align-items: center;
    margin-left: 15px;
}

.exts svg { width: 16px; height: 16px; margin-right: 16px; flex: none; }
.exts .avatar { width: 22px; height: 22px; margin: 0 14px 0 -3px; }

.ext-b {
    width: 16px;
    margin-right: 16px;
    font-family: "Liberation Sans", sans-serif;
    font-size: 17px;
    font-weight: 700;
    color: #c00;
    line-height: 16px;
}

.kebab {
    width: 3px;
    height: 3px;
    margin-left: 6px;
    border-radius: 50%;
    background: #eee;
    box-shadow: 0 -5px 0 #eee, 0 5px 0 #eee;
}

.viewport {
    flex: 1;
    min-height: 0;
    display: flex;
    background: #fff;
}

.page {
    width: 945px;
    flex: none;
    position: relative;
    overflow: hidden;
    display: flex;
    flex-direction: column;
    background: #7c8a89;
    font-family: "Liberation Sans", sans-serif;
    border-left: 1px solid #1d5c41;
    box-sizing: content-box;
}

.page-head {
    height: 60px;
    flex: none;
    background: #1d5c41;
    display: flex;
    align-items: center;
    margin-left: -1px;
}

.burger { width: 16px; height: 13px; margin-left: 48px; }

.page-body { padding: 67px 0 0 31px; }

.page-title {
    margin: 0;
    font-size: 24px;
    line-height: 34px;
    font-weight: 700;
    color: #0d1521;
    white-space: nowrap;
}

.page-btn {
    width: 150px;
    height: 36px;
    margin-top: 23px;
    background: #1d5c41;
    border-radius: 4px;
    color: #8aa59a;
    font-size: 14px;
    line-height: 36px;
    padding-left: 8px;
}

.page-tools {
    display: flex;
    align-items: center;
    margin: 16px 0 0 27px;
}

.page-tools svg { width: 14px; height: 14px; }
.add-box {
    width: 50px;
    height: 34px;
    margin-left: 11px;
    box-sizing: border-box;
    border: 1px solid #6c7a79;
    border-radius: 4px;
    display: flex;
    align-items: center;
    padding-left: 16px;
}

/* modal over the dimmed page */
.modal {
    position: absolute;
    left: 110px;
    top: 60px;
    width: 724px;
    height: 960px;
    background: #fff;
    border-radius: 8px 8px 0 0;
}

.modal-head {
    height: 64px;
    box-sizing: border-box;
    border-bottom: 1px solid #e5e7eb;
    display: flex;
    align-items: center;
    justify-content: space-between;
    padding: 0 26px 3px 16px;
}

.modal-title {
    margin: 0;
    font-size: 20px;
    font-weight: 700;
    color: #1a202c;
}

.modal-x { width: 12px; height: 12px; margin-top: 2px; }

.modal-body {
    padding: 51px 24px 0;
}

.field { display: flex; flex-direction: column; gap: 2px; }

.field label {
    font-size: 16px;
    line-height: 20px;
    color: #111;
}

.ctl {
    box-sizing: border-box;
    width: 100%;
    margin: 0;
    border: 1.5px solid #d6d6d6;
    border-radius: 2px;
    background: #fff;
    font-family: "Liberation Sans", sans-serif;
    outline: none;
}

.ctl-text { height: 34px; }
.ctl-area { height: 178px; display: block; }

.field-row {
    display: flex;
    gap: 24px;
    margin: 26px 0;
}

.field-row .field { width: 231px; }

.date-box {
    height: 38px;
    box-sizing: border-box;
    border: 1.5px solid #d6d6d6;
    border-radius: 2px;
    display: flex;
    align-items: center;
    padding-left: 13px;
}

.date-box svg { width: 16px; height: 16px; }

.ph {
    margin-left: 11px;
    font-size: 14px;
    font-style: italic;
    color: #a3a3a3;
}

.selects {
    display: flex;
    flex-direction: column;
    gap: 4px;
    margin-top: 31px;
}

.ctl-select {
    height: 34px;
    padding-left: 8px;
    font-size: 12px;
    color: #333;
}

.field-desc { margin-top: 30px; }

.page-scroll {
    width: 13px;
    margin-left: 2px;
    flex: none;
    display: flex;
    flex-direction: column;
    align-items: center;
    justify-content: space-between;
    background: #f1f1f1;
    padding: 8px 0 5px;
    box-sizing: border-box;
    position: relative;
}

.page-scroll svg { width: 8px; height: 5px; }

.page-thumb {
    position: absolute;
    left: 0;
    top: 18px;
    width: 13px;
    height: 855px;
    background: #c0c0c0;
}
```
